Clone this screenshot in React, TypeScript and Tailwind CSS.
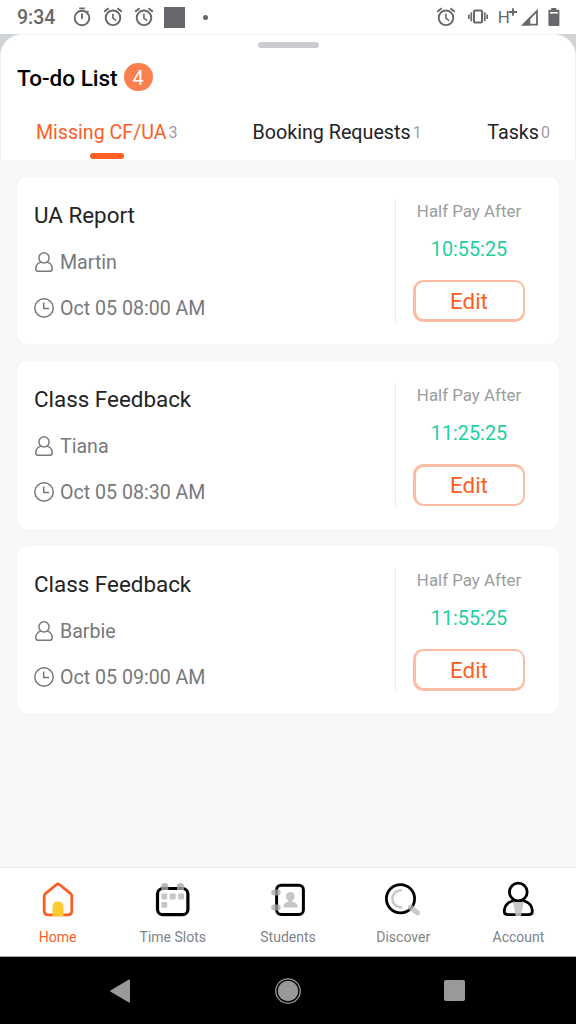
import type { ReactNode } from "react";

interface Todo {
  id: number;
  title: string;
  student: string;
  date: string;
  countdown: string;
}

const todos: Todo[] = [
  { id: 1, title: "UA Report", student: "Martin", date: "Oct 05 08:00 AM", countdown: "10:55:25" },
  { id: 2, title: "Class Feedback", student: "Tiana", date: "Oct 05 08:30 AM", countdown: "11:25:25" },
  { id: 3, title: "Class Feedback", student: "Barbie", date: "Oct 05 09:00 AM", countdown: "11:55:25" },
];

function AlarmIcon() {
  return (
    <svg className="h-5 w-5" viewBox="0 0 20 20" fill="none" stroke="currentColor" strokeWidth="1.9">
      <circle cx="10" cy="10.8" r="7.3" />
      <path d="M9.9 6.8v4.4l3.2 2.4" strokeWidth="1.6" />
      <path d="M1.2 4.8 5.6 1.2M18.8 4.8l-4.4-3.6" />
    </svg>
  );
}

function StopwatchIcon() {
  return (
    <svg className="h-5 w-5" viewBox="0 0 20 20" fill="none" stroke="currentColor" strokeWidth="1.9">
      <circle cx="10" cy="11" r="7.3" />
      <path d="M7.2 1.4h5.6M10 6.6v5.2M14.8 5.8l1.6-1.6" />
    </svg>
  );
}

function StatusBar() {
  return (
    <div className="flex h-[34px] shrink-0 items-center bg-white pr-[16px] pl-[17px] text-[#66686b]">
      <span className="mt-[2px] w-[54.5px] text-[19.5px] leading-none font-medium">9:34</span>
      <div className="flex items-center gap-[11px]">
        <StopwatchIcon />
        <AlarmIcon />
        <AlarmIcon />
      </div>
      <span className="ml-[10.5px] h-[21px] w-[21px] bg-[#66686b]" />
      <span className="ml-[18px] h-[5px] w-[5px] rounded-full bg-[#66686b]" />
      <div className="ml-auto flex items-center">
        <AlarmIcon />
        <svg className="ml-3 h-5 w-5" viewBox="0 0 20 20" fill="none" stroke="currentColor">
          <rect x="6" y="3.6" width="8" height="12" rx="1" strokeWidth="2" />
          <path d="M3.3 5.2v9M16.7 5.2v9" strokeWidth="1.7" />
          <path d="M.9 7.4v4.6M19.1 7.4v4.6" strokeWidth="1.7" />
        </svg>
        <span className="ml-[10px] flex">
          <span className="text-[17px] leading-5 tracking-[-1px]">H</span>
          <svg className="mt-[1px] h-2 w-2" viewBox="0 0 8 8" stroke="currentColor" strokeWidth="1.9">
            <path d="M0 4h8M4 .2v7.6" />
          </svg>
        </span>
        <svg className="ml-1 h-[17px] w-[18px]" viewBox="0 0 18 17">
          <path d="M16 2v13.7H2.3z" fill="none" stroke="currentColor" strokeWidth="1.8" />
          <path d="M9.3 8.2V16.5H.8z" fill="currentColor" />
        </svg>
        <svg className="ml-[9px] h-[18px] w-[12px]" viewBox="0 0 12 18" fill="currentColor">
          <path d="M3.3 0h5v1.8h2.1q1 0 1 1V17q0 1-1 1H1.4q-1 0-1-1V2.8q0-1 1-1h1.9z" />
          <path d="M2 4h7.8v1.6H2z" fill="#fff" />
        </svg>
      </div>
    </div>
  );
}

function Tab({ label, count, active }: { label: string; count: number; active?: boolean }) {
  return (
    <button className="flex flex-col items-center">
      <span className="flex items-center gap-[2px] leading-6">
        <span className={active ? "text-[19.6px] text-[#fd5e24]" : "text-[19.7px] text-[#222325]"}>{label}</span>
        <span className="text-[16px] text-[#9b9da1]">{count}</span>
      </span>
      {active && <span className="mt-[8px] h-[6px] w-[34px] rounded-full bg-[#fd5e24]" />}
    </button>
  );
}

function TodoCard({ todo }: { todo: Todo }) {
  return (
    <article className="flex h-[167.3px] rounded-[11px] bg-white px-[17px] py-[22px]">
      <div className="flex flex-1 flex-col">
        <h2 className="mt-[2px] text-[22.4px] leading-[28px] text-[#222325]">{todo.title}</h2>
        <div className="mt-[22px] flex items-center text-[19.6px] leading-6 text-[#77797d]">
          <svg className="mr-[6px] mb-[2px] h-5 w-5" viewBox="0 0 20 20" fill="none" stroke="currentColor" strokeWidth="1.5">
            <path d="M1.8 17C1.8 12.5 4.9 9.6 10 9.6S18.2 12.5 18.2 17q0 2.2-2.2 2.2H4Q1.800 19.200 1.800 17z" />
            <circle cx="10" cy="5.9" r="5.1" fill="#fff" />
          </svg>
          {todo.student}
        </div>
        <div className="mt-[22px] flex items-center text-[19.6px] leading-6 text-[#77797d]">
          <svg className="mr-[6px] mb-[2px] h-5 w-5" viewBox="0 0 20 20" fill="none" stroke="currentColor" strokeWidth="1.5">
            <circle cx="10" cy="10" r="9.2" />
            <path d="M9.7 4.4v6.2h5.4" />
          </svg>
          {todo.date}
        </div>
      </div>
      <div className="flex w-[147px] flex-col items-center border-l border-[#ececef]">
        <span className="mt-[2px] text-[16.9px] leading-5 text-[#9b9da1]">Half Pay After</span>
        <span className="mt-[17px] text-[19.8px] leading-6 text-[#1fd0a0]">{todo.countdown}</span>
        <button className="mt-[17.7px] flex h-[42px] w-[112px] shrink-0 rounded-[10px] bg-[#fdbda3] p-[2.5px]">
          <span className="flex flex-1 items-center justify-center self-stretch rounded-[8px] bg-white pt-[1px] text-[22.4px] leading-none text-[#fd5e24]">
            Edit
          </span>
        </button>
      </div>
    </article>
  );
}

function NavItem({ label, active, children }: { label: string; active?: boolean; children: ReactNode }) {
  return (
    <button className={`flex flex-1 flex-col items-center pt-[12px] text-[14px] leading-4 ${active ? "text-[#fd5e24]" : "text-[#818387]"}`}>
      <svg className="mb-[9px] h-10 w-10" viewBox="0 0 40 40" fill="none" strokeWidth="2.8" strokeLinejoin="round">
        {children}
      </svg>
      {label}
    </button>
  );
}

function BottomNav() {
  return (
    <nav className="flex h-[89px] shrink-0 border-t border-[#e6e7e9] bg-white">
      <NavItem label="Home" active>
        <path d="M18.6 4.500q1.400-1.100 2.800 0L32.600 13.700q1.200 1 1.200 2.600V30.700q0 4.200-4.200 4.200H10.400q-4.200 0-4.200-4.200V16.300q0-1.600 1.200-2.600z" stroke="#fd5e24" />
        <path d="M14.500 36.300V26.900q0-5.500 5.500-5.500t5.500 5.500v9.400z" fill="#fec931" />
      </NavItem>
      <NavItem label="Time Slots">
        <rect x="4.500" y="8.500" width="30.400" height="26.200" rx="5.500" stroke="#000" strokeWidth="3.200" />
        <path d="M8.300 10V6.500a3.500 3.500 0 0 1 7 0V10zM24 10V6.500a3.500 3.500 0 0 1 7 0V10z" fill="#a5a6a8" fillOpacity=".8" />
        <g fill="#c5c6c8">
          <rect x="8.400" y="13.600" width="5.800" height="5.800" rx="1" />
          <rect x="16.800" y="13.600" width="5.800" height="5.800" rx="1" />
          <rect x="25.200" y="13.600" width="5.800" height="5.800" rx="1" />
          <rect x="8.400" y="22" width="5.800" height="5.800" rx="1" />
        </g>
      </NavItem>
      <NavItem label="Students">
        <rect x="8.600" y="5.200" width="26.800" height="29.400" rx="4.500" stroke="#000" strokeWidth="3" />
        <g fill="#aaabad" fillOpacity=".75">
          <rect x="3.100" y="9.400" width="9.600" height="6" rx="3" />
          <rect x="3.100" y="24.400" width="9.600" height="6" rx="3" />
        </g>
        <circle cx="22.300" cy="16.400" r="4.400" fill="#c5c6c8" />
        <path d="M20.300 19.200h4v2.500c3.800.4 5.400 2.500 5.400 5.700H15.500c0-3.200 1.400-5.300 4.800-5.700z" fill="#c5c6c8" />
      </NavItem>
      <NavItem label="Discover">
        <circle cx="17.500" cy="18.800" r="14.100" stroke="#000" strokeWidth="2.800" />
        <path d="M18 10.200a8.600 8.600 0 1 0 0 17.200" stroke="#c8c9cc" strokeWidth="2.600" strokeLinecap="round" />
        <path d="m27.500 27.400 7 5.300" stroke="#bcbdc0" strokeOpacity=".8" strokeWidth="5.200" strokeLinecap="round" />
      </NavItem>
      <NavItem label="Account">
        <path d="M6.300 31.500C6.300 24.400 11.500 20.300 20.300 20.300S34.300 24.400 34.300 31.500q0 3.200-3.800 3.200H10.100q-3.800 0-3.800-3.200z" stroke="#000" />
        <circle cx="20.300" cy="12" r="8.900" fill="#fff" stroke="#000" />
        <path d="M14.800 21.600q5.500 1.600 11 0L22.900 36h-5.200z" fill="#c2c3c5" fillOpacity=".9" />
      </NavItem>
    </nav>
  );
}

function SystemNav() {
  return (
    <div className="flex h-[68px] shrink-0 items-center justify-between border-t border-[#a6a6a6] bg-black px-[111px] text-[#98999b]">
      <svg className="-ml-px h-6 w-[21px]" viewBox="0 0 21 24" fill="currentColor">
        <path d="M.7 11.200Q-.2 12 .7 12.800L18.500 23.300Q20 24 20 22.400V1.600Q20 0 18.500.7z" />
      </svg>
      <svg className="h-[26px] w-[26px]" viewBox="0 0 26 26">
        <circle cx="13" cy="13" r="12.200" fill="none" stroke="currentColor" strokeWidth="1.300" />
        <circle cx="13" cy="13" r="10.200" fill="currentColor" />
      </svg>
      <span className="h-[21px] w-[21px] rounded-[2px] bg-current" />
    </div>
  );
}

export default function App() {
  return (
    <div className="flex h-[1024px] w-[576px] flex-col overflow-hidden bg-[#d0d3d5] font-[Roboto,sans-serif]">
      <StatusBar />
      <main className="flex flex-1 flex-col overflow-hidden rounded-t-[22px] bg-[#f7f7fa]">
        <header className="flex h-[126px] shrink-0 flex-col rounded-t-[22px] border-x border-t border-[#f0f0f1] bg-white">
          <span className="mt-[7px] h-[6px] w-[61px] self-center rounded-full bg-[#cbccd1]" />
          <div className="mt-[14px] flex items-center gap-[6px] pl-4">
            <h1 className="mt-[2px] text-[22.5px] leading-7 font-medium text-black">To-do List</h1>
            <span className="flex h-7 w-[29px] items-center justify-center rounded-full bg-[#fc7f50] pt-[2px] text-[20px] leading-none text-white">
              4
            </span>
          </div>
          <div className="mt-[29px] flex items-start pr-[25px] pl-[35px]">
            <Tab label="Missing CF/UA" count={3} active />
            <div className="ml-[75px] flex flex-1 justify-between">
              <Tab label="Booking Requests" count={1} />
              <Tab label="Tasks" count={0} />
            </div>
          </div>
        </header>
        <section className="flex flex-col gap-[17.2px] px-[17px] pt-[17px]">
          {todos.map((todo) => (
            <TodoCard key={todo.id} todo={todo} />
          ))}
        </section>
      </main>
      <BottomNav />
      <SystemNav />
    </div>
  );
}
